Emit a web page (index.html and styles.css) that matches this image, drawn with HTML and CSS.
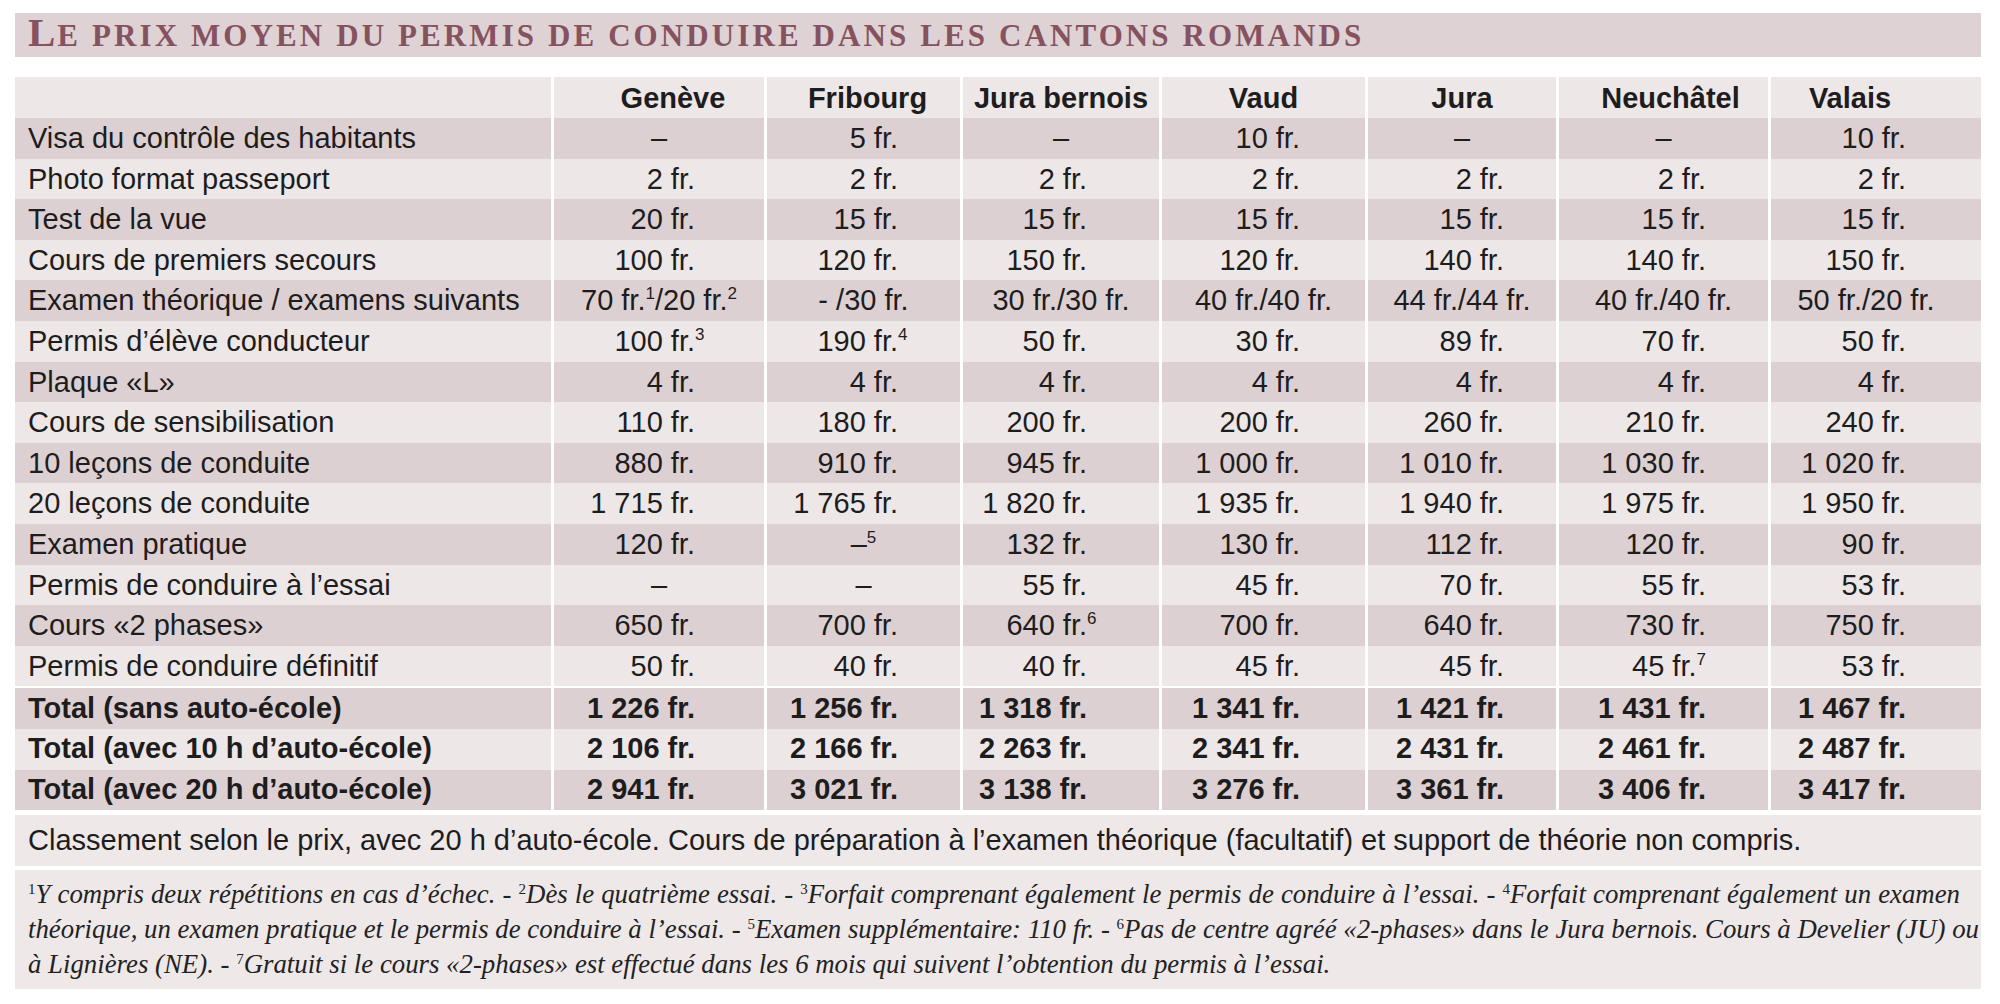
FILE: index.html
```html
<!DOCTYPE html>
<html lang="fr">
<head>
<meta charset="utf-8">
<title>Le prix moyen du permis de conduire dans les cantons romands</title>
<link rel="stylesheet" href="styles.css">
</head>
<body>
<div class="page">
  <h1 class="title"><span class="big">L</span>e prix moyen du permis de conduire dans les cantons romands</h1>

  <div class="grid">
    <div class="row h"><div></div><div>Genève</div><div>Fribourg</div><div>Jura bernois</div><div>Vaud</div><div>Jura</div><div>Neuchâtel</div><div>Valais</div></div>
    <div class="row d"><div>Visa du contrôle des habitants</div><div class="m">–</div><div>5 fr.</div><div class="m">–</div><div>10 fr.</div><div class="m">–</div><div class="m">–</div><div>10 fr.</div></div>
    <div class="row"><div>Photo format passeport</div><div>2 fr.</div><div>2 fr.</div><div>2 fr.</div><div>2 fr.</div><div>2 fr.</div><div>2 fr.</div><div>2 fr.</div></div>
    <div class="row d"><div>Test de la vue</div><div>20 fr.</div><div>15 fr.</div><div>15 fr.</div><div>15 fr.</div><div>15 fr.</div><div>15 fr.</div><div>15 fr.</div></div>
    <div class="row"><div>Cours de premiers secours</div><div>100 fr.</div><div>120 fr.</div><div>150 fr.</div><div>120 fr.</div><div>140 fr.</div><div>140 fr.</div><div>150 fr.</div></div>
    <div class="row d"><div>Examen théorique / examens suivants</div><div class="m">70 fr.<sup>1</sup>/20 fr.<sup>2</sup></div><div class="m">- /30 fr.</div><div class="m">30 fr./30 fr.</div><div class="m">40 fr./40 fr.</div><div class="m">44 fr./44 fr.</div><div class="m">40 fr./40 fr.</div><div class="m v8">50 fr./20 fr.</div></div>
    <div class="row"><div>Permis d’élève conducteur</div><div>100 fr.<sup class="o">3</sup></div><div>190 fr.<sup class="o">4</sup></div><div>50 fr.</div><div>30 fr.</div><div>89 fr.</div><div>70 fr.</div><div>50 fr.</div></div>
    <div class="row d"><div>Plaque «L»</div><div>4 fr.</div><div>4 fr.</div><div>4 fr.</div><div>4 fr.</div><div>4 fr.</div><div>4 fr.</div><div>4 fr.</div></div>
    <div class="row"><div>Cours de sensibilisation</div><div>110 fr.</div><div>180 fr.</div><div>200 fr.</div><div>200 fr.</div><div>260 fr.</div><div>210 fr.</div><div>240 fr.</div></div>
    <div class="row d"><div>10 leçons de conduite</div><div>880 fr.</div><div>910 fr.</div><div>945 fr.</div><div>1&nbsp;000 fr.</div><div>1&nbsp;010 fr.</div><div>1&nbsp;030 fr.</div><div>1&nbsp;020 fr.</div></div>
    <div class="row"><div>20 leçons de conduite</div><div>1&nbsp;715 fr.</div><div>1&nbsp;765 fr.</div><div>1&nbsp;820 fr.</div><div>1&nbsp;935 fr.</div><div>1&nbsp;940 fr.</div><div>1&nbsp;975 fr.</div><div>1&nbsp;950 fr.</div></div>
    <div class="row d"><div>Examen pratique</div><div>120 fr.</div><div class="m">–<sup>5</sup></div><div>132 fr.</div><div>130 fr.</div><div>112 fr.</div><div>120 fr.</div><div>90 fr.</div></div>
    <div class="row"><div>Permis de conduire à l’essai</div><div class="m">–</div><div class="m">–</div><div>55 fr.</div><div>45 fr.</div><div>70 fr.</div><div>55 fr.</div><div>53 fr.</div></div>
    <div class="row d"><div>Cours «2 phases»</div><div>650 fr.</div><div>700 fr.</div><div>640 fr.<sup class="o">6</sup></div><div>700 fr.</div><div>640 fr.</div><div>730 fr.</div><div>750 fr.</div></div>
    <div class="row"><div>Permis de conduire définitif</div><div>50 fr.</div><div>40 fr.</div><div>40 fr.</div><div>45 fr.</div><div>45 fr.</div><div>45 fr.<sup>7</sup></div><div>53 fr.</div></div>
    <div class="row d t t1"><div>Total (sans auto-école)</div><div>1&nbsp;226 fr.</div><div>1&nbsp;256 fr.</div><div>1&nbsp;318 fr.</div><div>1&nbsp;341 fr.</div><div>1&nbsp;421 fr.</div><div>1&nbsp;431 fr.</div><div>1&nbsp;467 fr.</div></div>
    <div class="row t"><div>Total (avec 10 h d’auto-école)</div><div>2&nbsp;106 fr.</div><div>2&nbsp;166 fr.</div><div>2&nbsp;263 fr.</div><div>2&nbsp;341 fr.</div><div>2&nbsp;431 fr.</div><div>2&nbsp;461 fr.</div><div>2&nbsp;487 fr.</div></div>
    <div class="row d t"><div>Total (avec 20 h d’auto-école)</div><div>2&nbsp;941 fr.</div><div>3&nbsp;021 fr.</div><div>3&nbsp;138 fr.</div><div>3&nbsp;276 fr.</div><div>3&nbsp;361 fr.</div><div>3&nbsp;406 fr.</div><div>3&nbsp;417 fr.</div></div>
  </div>

  <p class="note">Classement selon le prix, avec 20 h d’auto-école. Cours de préparation à l’examen théorique (facultatif) et support de théorie non compris.</p>

  <div class="foot">
    <div class="line j"><sup>1</sup>Y compris deux répétitions en cas d’échec. - <sup>2</sup>Dès le quatrième essai. - <sup>3</sup>Forfait comprenant également le permis de conduire à l’essai. - <sup>4</sup>Forfait comprenant également un examen</div>
    <div class="line j">théorique, un examen pratique et le permis de conduire à l’essai. - <sup>5</sup>Examen supplémentaire: 110 fr. - <sup>6</sup>Pas de centre agréé «2-phases» dans le Jura bernois. Cours à Develier (JU) ou</div>
    <div class="line">à Lignières (NE). - <sup>7</sup>Gratuit si le cours «2-phases» est effectué dans les 6 mois qui suivent l’obtention du permis à l’essai.</div>
  </div>
</div>
</body>
</html>
```

FILE: styles.css
```css
html, body {
  margin: 0;
  background: #ffffff;
}

body {
  font-family: "Liberation Sans", Arial, sans-serif;
  color: #1d1d1d;
}

.page {
  width: 1966px;
  padding: 13px 19px 0 15px;
}

.title {
  margin: 0;
  height: 44px;
  padding-left: 13px;
  background: #ded2d5;
  font-family: "Liberation Serif", "Times New Roman", serif;
  font-weight: bold;
  text-transform: uppercase;
  font-size: 31px;
  letter-spacing: 3.1px;
  line-height: 38px;
  color: #87525f;
  white-space: nowrap;
}

.title .big {
  font-size: 41px;
  letter-spacing: 2px;
}

.grid {
  margin-top: 20px;
  display: grid;
  grid-template-columns: 536px 210px 193px 196px 203px 188px 209px 210px;
  grid-template-rows: 41px repeat(14, 40.6px) 42.6px 40.6px 40.6px;
  column-gap: 3px;
  font-size: 29px;
}

.row {
  display: contents;
}

.row > div {
  background: #eee7e8;
  line-height: 34px;
  padding-top: 3px;
  white-space: nowrap;
  text-align: right;
}

.row.d > div {
  background: #ddd0d3;
}

.row > div:first-child {
  padding-left: 13px;
  text-align: left;
}

.row > div:nth-child(2) { padding-right: 69px; }
.row > div:nth-child(3) { padding-right: 62px; }
.row > div:nth-child(4) { padding-right: 72px; }
.row > div:nth-child(5) { padding-right: 65px; }
.row > div:nth-child(6) { padding-right: 52px; }
.row > div:nth-child(7) { padding-right: 62px; }
.row > div:nth-child(8) { padding-right: 75px; }

.row > div.m {
  text-align: center;
  padding-right: 0;
}

.row > div.m.v8 {
  padding-right: 20px;
}

.row.h > div {
  font-weight: bold;
  text-align: center;
  padding-top: 3.5px;
  padding-right: 0;
}

.row.h > div:nth-child(2) { padding-left: 28px; }
.row.h > div:nth-child(3) { padding-left: 8px; }
.row.h > div:nth-child(7) { padding-left: 14px; }
.row.h > div:nth-child(8) { padding-right: 52px; }

.row.t > div {
  font-weight: bold;
  padding-top: 2.5px;
}

.row.t1 > div {
  border-top: 2px solid #ffffff;
}

sup {
  font-size: 17px;
  line-height: 0;
  vertical-align: 11px;
}

sup.o {
  margin-right: -9.5px;
}

.note {
  margin: 5px 0 0;
  height: 51px;
  padding-left: 13px;
  background: #eee8e9;
  font-size: 29px;
  line-height: 51px;
  white-space: nowrap;
}

.foot {
  margin-top: 4px;
  padding: 7px 21px 7px 13px;
  background: #eee8e9;
  font-family: "Liberation Serif", "Times New Roman", serif;
  font-style: italic;
  font-size: 26.8px;
  line-height: 35px;
  color: #222222;
}

.foot .line {
  white-space: nowrap;
}

.foot .line.j {
  text-align: justify;
  text-align-last: justify;
}

.foot sup {
  font-size: 15px;
  font-style: normal;
  vertical-align: 9px;
}
```
